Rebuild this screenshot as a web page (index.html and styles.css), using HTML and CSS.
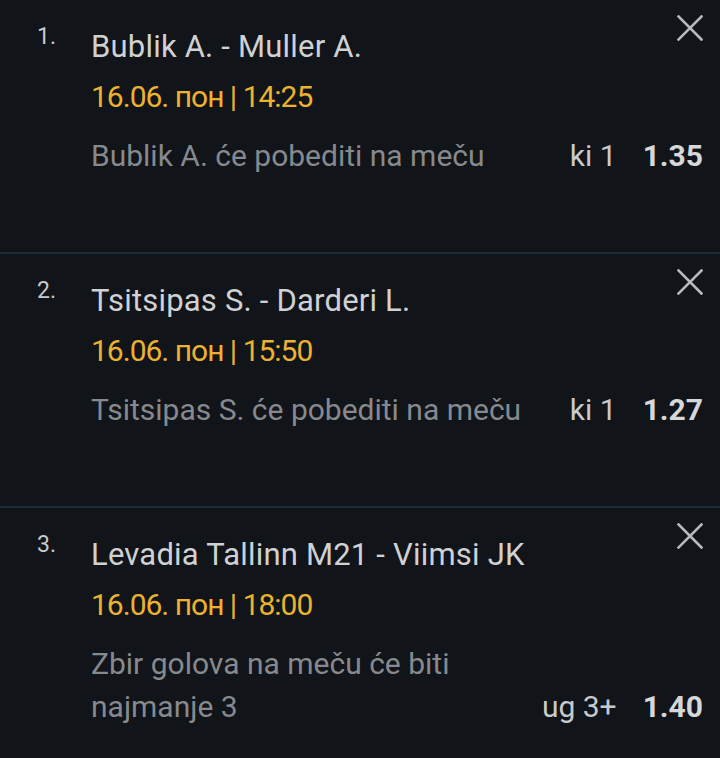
FILE: index.html
```html
<!DOCTYPE html>
<html lang="sr">
<head>
    <meta charset="UTF-8">
    <meta name="viewport" content="width=device-width, initial-scale=1.0">
    <title>Tiket</title>
    <link rel="stylesheet" href="styles.css">
</head>
<body>
    <div class="slip">
        <div class="bet">
            <div class="num">1.</div>
            <div class="body">
                <div class="title">Bublik A. - Muller A.</div>
                <div class="date">16.06. пон | 14:25</div>
                <div class="pick">
                    <div class="desc">Bublik A. će pobediti na meču</div>
                    <div class="odds"><span class="market">ki 1</span><span class="value">1.35</span></div>
                </div>
            </div>
            <button class="close" aria-label="Ukloni">
                <svg width="26" height="26" viewBox="0 0 26 26"><path d="M1.5 1.5 L24.5 24.5 M24.5 1.5 L1.5 24.5" stroke="#b8b9ba" stroke-width="2.6" stroke-linecap="square"/></svg>
            </button>
        </div>
        <div class="bet">
            <div class="num">2.</div>
            <div class="body">
                <div class="title">Tsitsipas S. - Darderi L.</div>
                <div class="date">16.06. пон | 15:50</div>
                <div class="pick">
                    <div class="desc">Tsitsipas S. će pobediti na meču</div>
                    <div class="odds"><span class="market">ki 1</span><span class="value">1.27</span></div>
                </div>
            </div>
            <button class="close" aria-label="Ukloni">
                <svg width="26" height="26" viewBox="0 0 26 26"><path d="M1.5 1.5 L24.5 24.5 M24.5 1.5 L1.5 24.5" stroke="#b8b9ba" stroke-width="2.6" stroke-linecap="square"/></svg>
            </button>
        </div>
        <div class="bet">
            <div class="num">3.</div>
            <div class="body">
                <div class="title">Levadia Tallinn M21 - Viimsi JK</div>
                <div class="date">16.06. пон | 18:00</div>
                <div class="pick">
                    <div class="desc">Zbir golova na meču će biti<br>najmanje 3</div>
                    <div class="odds"><span class="market">ug 3+</span><span class="value">1.40</span></div>
                </div>
            </div>
            <button class="close" aria-label="Ukloni">
                <svg width="26" height="26" viewBox="0 0 26 26"><path d="M1.5 1.5 L24.5 24.5 M24.5 1.5 L1.5 24.5" stroke="#b8b9ba" stroke-width="2.6" stroke-linecap="square"/></svg>
            </button>
        </div>
    </div>
</body>
</html>
```

FILE: styles.css
```css
body {
    margin: 0;
    padding: 0;
    background-color: #111418;
    font-family: 'Roboto', 'Liberation Sans', sans-serif;
    color: #d4d5d6;
}

.slip {
    display: flex;
    flex-direction: column;
}

.bet {
    position: relative;
    display: flex;
    height: 254px;
    box-sizing: border-box;
    border-bottom: 2px solid #1b2a38;
}

.num {
    width: 91px;
    box-sizing: border-box;
    padding-left: 37px;
    padding-top: 23px;
    font-size: 23px;
    color: #c8c9ca;
}

.body {
    flex: 1;
    padding-top: 27px;
    padding-right: 17px;
}

.title {
    font-size: 31px;
    line-height: 40px;
    letter-spacing: 0.2px;
    color: #d0d1d2;
}

.date {
    margin-top: 10px;
    font-size: 30px;
    line-height: 40px;
    letter-spacing: -1px;
    color: #eab230;
}

.pick {
    margin-top: 17px;
    display: flex;
    justify-content: space-between;
    align-items: flex-end;
}

.desc {
    font-size: 30px;
    line-height: 43px;
    color: #86898d;
}

.odds {
    display: flex;
    gap: 26px;
    font-size: 30px;
    line-height: 43px;
    white-space: nowrap;
}

.market {
    color: #c9cacb;
}

.value {
    font-weight: bold;
    color: #d6d7d8;
}

.close {
    position: absolute;
    top: 15px;
    right: 17px;
    padding: 0;
    border: none;
    background: none;
    width: 26px;
    height: 26px;
    cursor: pointer;
}

.close svg {
    display: block;
}
```
